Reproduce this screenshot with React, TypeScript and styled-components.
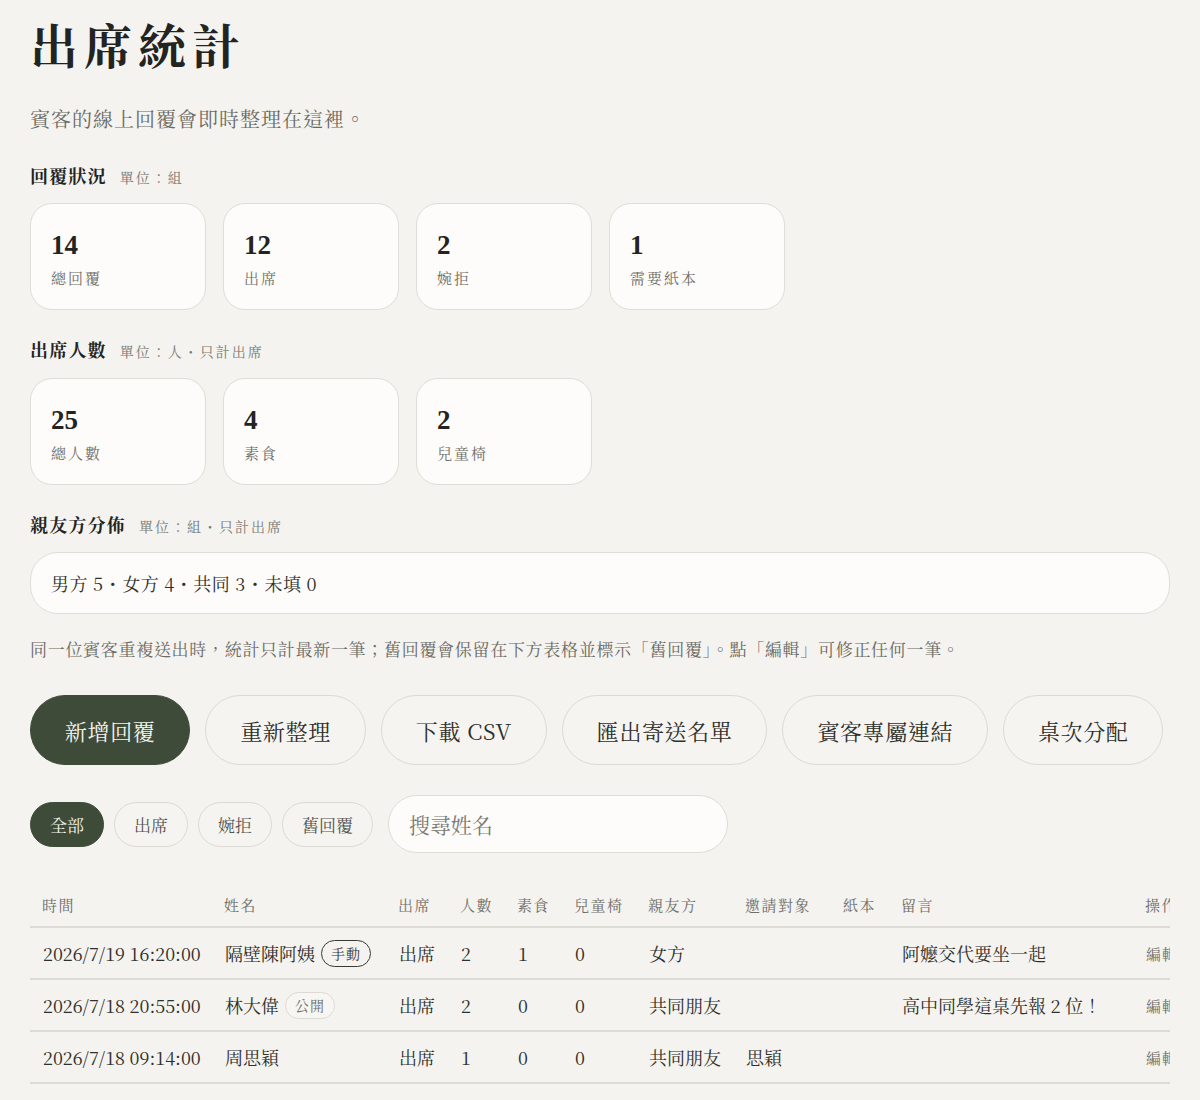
import React from "react";
import styled, { createGlobalStyle } from "styled-components";

const FONT = `"Noto Serif CJK TC", "Liberation Serif", serif`;
const NUM_FONT = `"Liberation Serif", "Noto Serif CJK TC", serif`;

const Global = createGlobalStyle`
  html, body { margin: 0; padding: 0; background: #f4f3ef; }
  body { font-family: ${FONT}; color: #2a2a26; }
  * { box-sizing: border-box; }
`;

const Page = styled.main`
  padding: 12px 30px 20px;
  display: flex;
  flex-direction: column;
`;

const Title = styled.h1`
  margin: 0;
  font-size: 48px;
  font-weight: 700;
  letter-spacing: 6px;
  line-height: 64px;
  color: #23231f;
`;

const Subtitle = styled.p`
  margin: 28px 0 0;
  font-size: 20px;
  line-height: 30px;
  letter-spacing: 1px;
  color: #6b6a64;
`;

const SectionHead = styled.div<{ $top: number }>`
  display: flex;
  align-items: baseline;
  gap: 13px;
  margin-top: ${(p) => p.$top}px;
`;

const SectionTitle = styled.h2`
  margin: 0;
  font-size: 18px;
  font-weight: 700;
  letter-spacing: 1.2px;
  line-height: 24px;
  color: #23231f;
`;

const SectionUnit = styled.span`
  font-size: 14px;
  letter-spacing: 2px;
  color: #7a7972;
`;

const CardRow = styled.div<{ $top: number }>`
  display: flex;
  gap: 17px;
  margin-top: ${(p) => p.$top}px;
`;

const StatCard = styled.div`
  width: 176px;
  height: 107px;
  flex-shrink: 0;
  border: 1.5px solid #dfddd8;
  border-radius: 22px;
  background: #fdfcfa;
  padding: 26px 20px 0;
  display: flex;
  flex-direction: column;
`;

const StatNum = styled.div`
  font-family: ${NUM_FONT};
  font-size: 27px;
  font-weight: 700;
  line-height: 30px;
  color: #23231f;
`;

const StatLabel = styled.div`
  margin-top: 8px;
  font-size: 15px;
  letter-spacing: 2px;
  line-height: 20px;
  color: #6f6e68;
`;

const DistCard = styled.div`
  margin-top: 16px;
  height: 62px;
  border: 1.5px solid #dfddd8;
  border-radius: 28px;
  background: #fdfcfa;
  padding: 0 20px;
  display: flex;
  align-items: center;
  font-size: 18px;
  letter-spacing: 0.5px;
  color: #2f2f2b;
`;

const Note = styled.p`
  margin: 22px 0 0;
  font-size: 17px;
  letter-spacing: 0.7px;
  line-height: 26px;
  color: #6b6a64;
`;

const Toolbar = styled.div`
  display: flex;
  gap: 15px;
  margin-top: 33px;
`;

const ActionButton = styled.button<{ $primary?: boolean }>`
  flex-shrink: 0;
  white-space: nowrap;
  height: 70px;
  padding: 0 34px;
  border-radius: 35px;
  font-family: ${FONT};
  font-size: 22px;
  letter-spacing: 0.6px;
  border: 1.5px solid ${(p) => (p.$primary ? "#3e4b39" : "#dcdad5")};
  background: ${(p) => (p.$primary ? "#3e4b39" : "#f5f4f0")};
  color: ${(p) => (p.$primary ? "#f4f3ef" : "#2f2f2b")};
  cursor: pointer;
`;

const FilterRow = styled.div`
  display: flex;
  align-items: center;
  gap: 10px;
  margin-top: 30px;
`;

const Chip = styled.button<{ $active?: boolean }>`
  flex-shrink: 0;
  white-space: nowrap;
  height: 45px;
  padding: 0 19px;
  border-radius: 23px;
  font-family: ${FONT};
  font-size: 17px;
  border: 1.5px solid ${(p) => (p.$active ? "#3e4b39" : "#dcdad5")};
  background: ${(p) => (p.$active ? "#3e4b39" : "#f5f4f0")};
  color: ${(p) => (p.$active ? "#f4f3ef" : "#55544f")};
`;

const Search = styled.input`
  margin-left: 5px;
  width: 340px;
  height: 58px;
  border-radius: 29px;
  border: 1.5px solid #dfddd8;
  background: #fdfcfa;
  padding: 0 20px;
  font-family: ${FONT};
  font-size: 21px;
  color: #2f2f2b;
  outline: none;
  &::placeholder { color: #7a7972; }
`;

const TableWrap = styled.div`
  margin-top: 26px;
  width: 1140px;
  overflow-x: auto;
  scrollbar-width: none;
  &::-webkit-scrollbar { display: none; }
`;

const Table = styled.table`
  width: 1220px;
  border-collapse: collapse;
  table-layout: fixed;
`;

const Th = styled.th<{ $w: number }>`
  width: ${(p) => p.$w}px;
  text-align: left;
  font-weight: 400;
  font-size: 15px;
  letter-spacing: 1.5px;
  white-space: nowrap;
  color: #6f6e68;
  padding: 14px 12px 9px;
  line-height: 24px;
  border-bottom: 2px solid #dedcd7;
`;

const Td = styled.td<{ $small?: boolean }>`
  padding: 0 13px;
  height: 52px;
  font-size: ${(p) => (p.$small ? "15px" : "18px")};
  color: ${(p) => (p.$small ? "#6f6e68" : "#2f2f2b")};
  letter-spacing: ${(p) => (p.$small ? "1px" : "0")};
  white-space: nowrap;
  border-bottom: 2px solid #dedcd7;
`;

const NameCell = styled.span`
  display: inline-flex;
  align-items: center;
  gap: 6px;
`;

const Badge = styled.span<{ $dark?: boolean }>`
  display: inline-flex;
  align-items: center;
  height: 27px;
  padding: 0 9px;
  border-radius: 14px;
  font-size: 14px;
  letter-spacing: 1px;
  border: ${(p) => (p.$dark ? "1.5px solid #3a3a35" : "1.5px solid #dcdad5")};
  color: ${(p) => (p.$dark ? "#3a3a35" : "#6f6e68")};
  background: ${(p) => (p.$dark ? "transparent" : "#f7f6f2")};
`;

const stats1 = [
  { n: "14", l: "總回覆" },
  { n: "12", l: "出席" },
  { n: "2", l: "婉拒" },
  { n: "1", l: "需要紙本" },
];
const stats2 = [
  { n: "25", l: "總人數" },
  { n: "4", l: "素食" },
  { n: "2", l: "兒童椅" },
];

const cols = [
  { h: "時間", w: 182 },
  { h: "姓名", w: 174 },
  { h: "出席", w: 62 },
  { h: "人數", w: 57 },
  { h: "素食", w: 57 },
  { h: "兒童椅", w: 74 },
  { h: "親友方", w: 97 },
  { h: "邀請對象", w: 98 },
  { h: "紙本", w: 58 },
  { h: "留言", w: 244 },
  { h: "操作", w: 117 },
];

type Row = {
  time: string;
  name: string;
  badge?: { t: string; dark?: boolean };
  att: string;
  n: string;
  veg: string;
  chair: string;
  side: string;
  invite: string;
  paper: string;
  msg: string;
};

const rows: Row[] = [
  { time: "2026/7/19 16:20:00", name: "隔壁陳阿姨", badge: { t: "手動", dark: true }, att: "出席", n: "2", veg: "1", chair: "0", side: "女方", invite: "", paper: "", msg: "阿嬤交代要坐一起" },
  { time: "2026/7/18 20:55:00", name: "林大偉", badge: { t: "公開" }, att: "出席", n: "2", veg: "0", chair: "0", side: "共同朋友", invite: "", paper: "", msg: "高中同學這桌先報 2 位！" },
  { time: "2026/7/18 09:14:00", name: "周思穎", att: "出席", n: "1", veg: "0", chair: "0", side: "共同朋友", invite: "思穎", paper: "", msg: "" },
];

export default function App() {
  return (
    <>
      <Global />
      <Page>
        <Title>出席統計</Title>
        <Subtitle>賓客的線上回覆會即時整理在這裡。</Subtitle>

        <SectionHead $top={29}>
          <SectionTitle>回覆狀況</SectionTitle>
          <SectionUnit>單位：組</SectionUnit>
        </SectionHead>
        <CardRow $top={16}>
          {stats1.map((s) => (
            <StatCard key={s.l}>
              <StatNum>{s.n}</StatNum>
              <StatLabel>{s.l}</StatLabel>
            </StatCard>
          ))}
        </CardRow>

        <SectionHead $top={27}>
          <SectionTitle>出席人數</SectionTitle>
          <SectionUnit>單位：人・只計出席</SectionUnit>
        </SectionHead>
        <CardRow $top={17}>
          {stats2.map((s) => (
            <StatCard key={s.l}>
              <StatNum>{s.n}</StatNum>
              <StatLabel>{s.l}</StatLabel>
            </StatCard>
          ))}
        </CardRow>

        <SectionHead $top={27}>
          <SectionTitle>親友方分佈</SectionTitle>
          <SectionUnit>單位：組・只計出席</SectionUnit>
        </SectionHead>
        <DistCard>男方 5・女方 4・共同 3・未填 0</DistCard>

        <Note>同一位賓客重複送出時，統計只計最新一筆；舊回覆會保留在下方表格並標示「舊回覆」。點「編輯」可修正任何一筆。</Note>

        <Toolbar>
          <ActionButton $primary>新增回覆</ActionButton>
          <ActionButton>重新整理</ActionButton>
          <ActionButton>下載 CSV</ActionButton>
          <ActionButton>匯出寄送名單</ActionButton>
          <ActionButton>賓客專屬連結</ActionButton>
          <ActionButton>桌次分配</ActionButton>
        </Toolbar>

        <FilterRow>
          <Chip $active>全部</Chip>
          <Chip>出席</Chip>
          <Chip>婉拒</Chip>
          <Chip>舊回覆</Chip>
          <Search placeholder="搜尋姓名" />
        </FilterRow>

        <TableWrap>
          <Table>
            <thead>
              <tr>
                {cols.map((c) => (
                  <Th key={c.h} $w={c.w}>{c.h}</Th>
                ))}
              </tr>
            </thead>
            <tbody>
              {rows.map((r) => (
                <tr key={r.time}>
                  <Td>{r.time}</Td>
                  <Td>
                    <NameCell>
                      {r.name}
                      {r.badge && <Badge $dark={r.badge.dark}>{r.badge.t}</Badge>}
                    </NameCell>
                  </Td>
                  <Td>{r.att}</Td>
                  <Td>{r.n}</Td>
                  <Td>{r.veg}</Td>
                  <Td>{r.chair}</Td>
                  <Td>{r.side}</Td>
                  <Td>{r.invite}</Td>
                  <Td>{r.paper}</Td>
                  <Td>{r.msg}</Td>
                  <Td $small>編輯</Td>
                </tr>
              ))}
            </tbody>
          </Table>
        </TableWrap>
      </Page>
    </>
  );
}
